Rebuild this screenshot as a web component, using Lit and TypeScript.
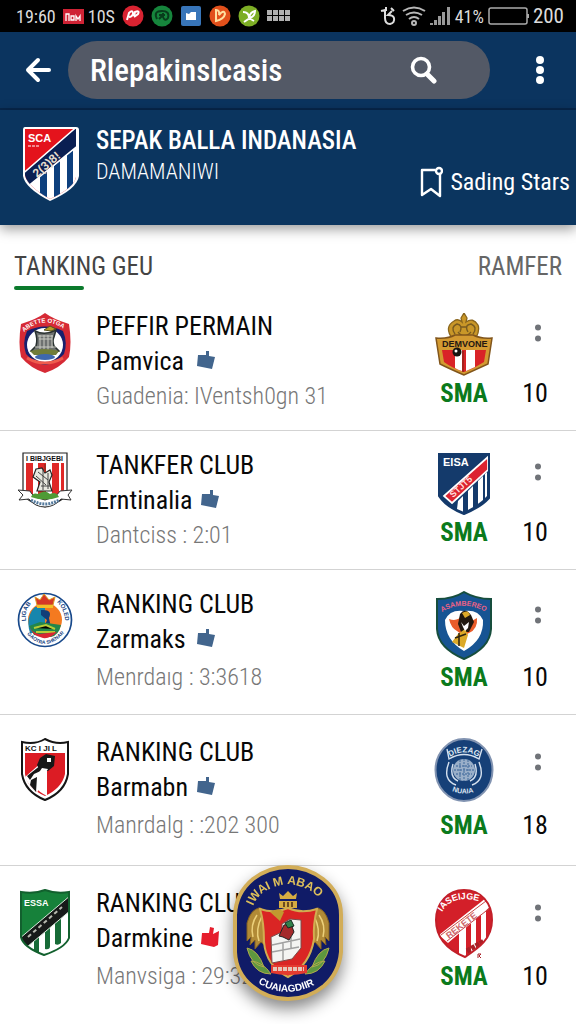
import { LitElement, html, svg, css, TemplateResult } from "lit";
import { customElement, property, state } from "lit/decorators.js";
import { classMap } from "lit/directives/class-map.js";

const crestStyles = css`
  :host { display: block; }
  svg { display: block; }
  text { font-family: "Liberation Sans", sans-serif; font-weight: 700; }
`;

const crests: Record<string, TemplateResult> = {
  sca: html`<svg width="58" height="76" viewBox="0 0 58 76" aria-hidden="true">
    <defs><clipPath id="c"><path d="M3 3H54V51Q52 62 28 73Q5 60 3 49Z"/></clipPath></defs>
    <path d="M3 1H54Q57 1 57 4V50Q55 63 28 75Q3 62 1 50V4Q1 1 3 1Z" fill="#fff"/>
    <g clip-path="url(#c)">
      <path d="M0 0H58V76H0Z" fill="#e4131c"/>
      <path d="M0 58L58 12V76H0Z" fill="#fff"/>
      <path d="M18 50L25 44V76H18ZM32 40L38 35V76H32ZM45 29L51 24V76H45Z" fill="#0d3f7d"/>
      <path d="M-2 50L58 -2V18L5 61Z" fill="#0a1f52" stroke="#fff" stroke-width="1.5"/>
      <path d="M6 60L28 75L4 70Z" fill="#0d3f7d"/>
    </g>
    <text x="6" y="16" font-size="11" fill="#fff">SCA</text>
    <path d="M6 20H18" stroke="#fff" stroke-width="1" stroke-dasharray="3 1"/>
    <text x="15" y="52" font-size="12" fill="#e8dfd0" transform="rotate(-41 15 52)">2(3)8!</text>
  </svg>`,
  round: html`<svg width="54" height="60" viewBox="0 0 54 60" aria-hidden="true">
    <defs><path id="a" d="M6 19Q27 0 50 19"/></defs>
    <path d="M27 0Q35 6 51 11Q54 30 51 44Q42 55 27 60Q12 55 3 44Q0 30 3 11Q19 6 27 0Z" fill="#d62a35"/>
    <path d="M9 18Q27 9 45 18Q50 30 46 41Q38 50 27 52Q16 50 8 41Q4 30 9 18Z" fill="#18206e"/>
    <ellipse cx="27" cy="32" rx="18" ry="17" fill="#fff"/>
    <path d="M17 18Q27 23 38 17L36 24Q34 28 36 33L41 38Q27 44 13 38L18 33Q20 26 17 18Z" fill="#6e7170" stroke="#28302f" stroke-width="1.5"/>
    <path d="M20 23H35M21 26H34M22 22V36M26 22V37M30 22V37M34 22V35M17 34H38" stroke="#c9cbc2" stroke-width="1"/>
    <path d="M26 17L32 13L38 16L33 18Z" fill="#b99c24" stroke="#57501e"/>
    <path d="M12 38Q27 34 41 38L38 42H16Z" fill="#707c39"/>
    <ellipse cx="27" cy="44" rx="10" ry="3" fill="#3e68ae"/>
    <path d="M9 45Q27 55 45 45" fill="none" stroke="#ef5b4d" stroke-width="3"/>
    <text font-size="6" fill="#fff"><textPath href="#a">ABETTE OTGA</textPath></text>
  </svg>`,
  banner: html`<svg width="56" height="58" viewBox="0 0 56 58" aria-hidden="true">
    <path d="M6 1H50V43Q44 50 28 55Q12 51 6 43Z" fill="#fff" stroke="#222" stroke-width="1.2"/>
    <path d="M9 11H47V42Q38 49 28 51Q16 49 9 42Z" fill="#df2827"/>
    <path d="M16 11H21V46H16ZM29 11H35V48H29ZM42 11H44V44H42Z" fill="#fff"/>
    <text x="9" y="9" font-size="7" fill="#111">I BIBJGEBI</text>
    <path d="M19 17L25 16L28 21L33 18L35 23L32 30L35 39H20L23 30L16 25Z" fill="#e7e7df" stroke="#222" stroke-width="1.2"/>
    <path d="M21 20L31 28M19 24L29 33M24 34H34M26 17V38M31 21V37" stroke="#444"/>
    <path d="M28 12V20" stroke="#a82a20" stroke-width="2"/>
    <path d="M1 38L13 39Q15 45 28 48Q40 45 43 39L55 38L51 43L54 48L44 47Q37 55 28 55Q18 55 12 47L2 48L6 43Z" fill="#fff" stroke="#333"/>
    <path d="M14 45Q16 40 21 42Q28 37 33 42Q39 39 42 45Q28 50 14 45Z" fill="#4e9b35"/>
    <path d="M14 48Q28 56 42 48" fill="none" stroke="#547a9d" stroke-width="3" stroke-dasharray="2 1"/>
  </svg>`,
  harbour: html`<svg width="56" height="58" viewBox="0 0 56 58" aria-hidden="true">
    <defs><path id="l" d="M9 30Q7 18 18 9"/><path id="r" d="M40 11Q48 19 48 31"/><path id="b" d="M10 43Q28 64 48 41"/></defs>
    <circle cx="28" cy="29" r="26.5" fill="#fff" stroke="#18498b" stroke-width="1.7"/>
    <circle cx="28" cy="29" r="17" fill="#f47a20"/>
    <path d="M18 16H28V42H13Q8 26 18 16Z" fill="#1686ad"/>
    <path d="M18 6L23 9L27 3L32 9L38 6L36 14H20Z" fill="#d63726" stroke="#d99b21"/>
    <path d="M20 14H36V17H20Z" fill="#f3bd27"/>
    <path d="M24 19Q36 18 32 27L34 37H27L30 29L24 24Z" fill="#123e78"/>
    <path d="M12 35L23 31L44 34Q42 44 34 46L17 44Z" fill="#23864b"/>
    <path d="M17 37L29 34L38 38M19 41H38" stroke="#b6cc37" stroke-width="2"/>
    <path d="M12 33Q13 41 22 43L40 41Q33 48 26 47Q14 45 12 33Z" fill="#d92632"/>
    <text font-size="6" fill="#16437f"><textPath href="#l">LIGAB</textPath></text>
    <text font-size="6" fill="#16437f"><textPath href="#r">KOLED</textPath></text>
    <text font-size="5" fill="#16437f"><textPath href="#b">GAOTRA SHENAR</textPath></text>
  </svg>`,
  knight: html`<svg width="50" height="64" viewBox="0 0 50 64" aria-hidden="true">
    <path d="M2 4Q15 7 25 1Q36 7 48 4V36Q45 54 25 62Q5 54 2 36Z" fill="#fff" stroke="#151515" stroke-width="2"/>
    <path d="M5 15H45V36Q42 50 25 58Q7 50 5 36Z" fill="#dc1c24"/>
    <path d="M19 29H27V58Q19 54 16 50Z" fill="#fff"/>
    <path d="M5 39L21 25L27 31L19 39L18 54Q8 48 5 39Z" fill="#fff"/>
    <path d="M20 20L26 16L35 18L34 28L28 33H20L17 27Z" fill="#171717"/>
    <path d="M7 38L21 27L25 31L14 36L10 42ZM11 42L17 39L16 54L10 47Z" fill="#171717"/>
    <path d="M27 20H31V24H27M22 30L28 31L25 36H18Z" fill="#fff"/>
    <text x="5" y="13" font-size="8" fill="#111">KC I JI L</text>
  </svg>`,
  essa: html`<svg width="52" height="68" viewBox="0 0 52 68" aria-hidden="true">
    <defs><clipPath id="c"><path d="M2 3Q16 5 26 1Q37 5 50 3V49Q46 59 25 66Q4 58 2 48Z"/></clipPath></defs>
    <g clip-path="url(#c)">
      <path d="M0 0H52V68H0Z" fill="#16813a"/>
      <path d="M2 57L52 19V68H2Z" fill="#fff"/>
      <path d="M15 47L20 43V68H15ZM26 39L31 35V57Q31 61 26 60ZM36 31L42 27V54Q39 57 36 55Z" fill="#176b37"/>
      <path d="M0 50L52 6V21L8 58Z" fill="#171a19" stroke="#d8eadb"/>
      <path d="M9 48L43 18" stroke="#b8bab0" stroke-width="2" stroke-dasharray="4 3"/>
    </g>
    <path d="M2 3Q16 5 26 1Q37 5 50 3V49Q46 59 25 66Q4 58 2 48Z" fill="none" stroke="#12602e" stroke-width="2"/>
    <text x="5" y="17" font-size="9" fill="#fff">ESSA</text>
  </svg>`,
  crown: html`<svg width="58" height="64" viewBox="0 0 58 64" aria-hidden="true">
    <path d="M17 25Q9 14 19 8Q23 5 27 9L26 5L29 0L32 5L31 9Q38 4 43 12Q45 17 41 25Z" fill="#c99728" stroke="#89651d" stroke-width="1.3"/>
    <path d="M20 21Q15 14 22 11Q28 12 25 19M38 21Q43 14 36 11Q29 12 33 19M23 19Q29 27 36 19M26 14H32" fill="none" stroke="#795b20" stroke-width="1.4"/>
    <path d="M1 25Q13 26 20 22H38Q46 26 57 25L53 51Q42 56 29 62Q15 56 5 51Z" fill="#d39a31" stroke="#81551b" stroke-width="1.5"/>
    <path d="M7 37H51L49 49Q40 55 29 59Q17 55 9 49Z" fill="#d92327"/>
    <path d="M20 37H27V58Q23 57 20 55ZM31 37H40V54L31 58Z" fill="#fff"/>
    <path d="M28 38V59" stroke="#92231d" stroke-width="1.5"/>
    <circle cx="22" cy="39" r="4.5" fill="#171411"/><circle cx="21" cy="38" r="1.5" fill="#fff"/>
    <text x="7" y="34" font-size="9" fill="#241711">DEMVONE</text>
  </svg>`,
  eisa: html`<svg width="52" height="64" viewBox="0 0 52 64" aria-hidden="true">
    <path d="M1 2H51V46Q43 55 26 62Q8 55 1 44Z" fill="#143a6b"/>
    <path d="M20 49L49 20V44Q42 52 26 60L19 57Z" fill="#fff"/>
    <path d="M25 43L30 38V60H25ZM35 33L40 28V56H35ZM45 23L47 21V51H45Z" fill="#143a6b"/>
    <path d="M6 44L50 5V18L14 51Z" fill="#dc2330" stroke="#fff" stroke-width="1.7"/>
    <path d="M1 2H51V46Q43 55 26 62Q8 55 1 44Z" fill="none" stroke="#143a6b" stroke-width="2"/>
    <text x="5" y="14" font-size="11" fill="#fff">EISA</text>
    <text x="15" y="46" font-size="9" fill="#ffdfdc" transform="rotate(-42 15 46)">STJT5</text>
  </svg>`,
  garuda: html`<svg width="58" height="70" viewBox="0 0 58 70" aria-hidden="true">
    <defs><path id="a" d="M7 21Q29 8 53 22"/></defs>
    <path d="M2 8Q18 8 29 1Q41 8 56 8V38Q55 57 29 68Q3 57 2 38Z" fill="#175493" stroke="#174e3d" stroke-width="2"/>
    <path d="M10 29Q15 18 29 20Q43 18 48 29Q49 49 29 60Q10 49 10 29Z" fill="#fff"/>
    <path d="M14 28Q23 31 27 24Q32 25 35 31L42 27Q43 38 34 42Q28 46 22 40Q16 37 14 28Z" fill="#e95c2a"/>
    <path d="M25 23Q30 16 36 24L39 31L34 41L26 41L23 33Z" fill="#21180f"/>
    <path d="M27 22Q33 18 35 24L30 27ZM23 43L30 38L33 44L29 57L17 51Z" fill="#dca928"/>
    <path d="M26 31L29 35L34 31L33 37L30 40L28 36Z" fill="#fff"/>
    <path d="M20 47L31 43M24 42V55" stroke="#2f2410" stroke-width="1.5"/>
    <text font-size="7" fill="#ef6285"><textPath href="#a">ASAMBEREO</textPath></text>
  </svg>`,
  seal: html`<svg width="60" height="64" viewBox="0 0 60 64" aria-hidden="true">
    <defs><path id="a" d="M16 19Q30 9 46 20"/><path id="b" d="M18 53Q30 58 44 53"/></defs>
    <ellipse cx="30" cy="32" rx="28.5" ry="31" fill="#164078" stroke="#8193b1" stroke-width="2"/>
    <path d="M13 11L15 21Q30 12 45 21L48 11M15 24Q8 42 22 47M45 24Q52 42 38 47M19 26Q15 39 24 43M41 26Q45 39 36 43" fill="none" stroke="#d6e1ef" stroke-width="1.4"/>
    <circle cx="30" cy="32" r="11" fill="#9aafc9"/>
    <path d="M22 28H38M20 32H40M22 36H38M26 22V42M30 21V43M34 22V42" stroke="#557aa6" stroke-width="1.3" stroke-dasharray="2 1"/>
    <text font-size="8" fill="#dce7f3"><textPath href="#a">DIEZAG</textPath></text>
    <text font-size="7" fill="#dce7f3"><textPath href="#b">NUAIA</textPath></text>
  </svg>`,
  stripes: html`<svg width="60" height="70" viewBox="0 0 60 70" aria-hidden="true">
    <defs>
      <clipPath id="c"><path d="M30 1C47 1 58 14 58 31C58 51 43 60 31 68C14 61 2 49 2 31C2 14 14 1 30 1Z"/></clipPath>
      <path id="a" d="M8 23Q20 3 50 14"/>
    </defs>
    <g clip-path="url(#c)">
      <path d="M0 0H60V70H0Z" fill="#d31f29"/>
      <path d="M25 42L32 37V70H25ZM37 33L42 29V70H37ZM47 25L52 21V70H47Z" fill="#fff"/>
      <path d="M5 46L52 9L57 17L14 54Z" fill="#fff"/>
      <path d="M7 46L52 12M13 52L56 19" stroke="#c74547" stroke-width="1"/>
      <path d="M33 62L50 52" stroke="#a81f26" stroke-width="5" stroke-dasharray="4 1"/>
    </g>
    <path d="M30 1C47 1 58 14 58 31C58 51 43 60 31 68C14 61 2 49 2 31C2 14 14 1 30 1Z" fill="none" stroke="#c21f29" stroke-width="2"/>
    <text font-size="9" fill="#fff"><textPath href="#a">IASEIJGE</textPath></text>
    <text x="15" y="50" font-size="9" fill="#ce686b" transform="rotate(-38 15 50)">REKETE</text>
    <path d="M44 69V65H47L45 67L47 69" fill="none" stroke="#a81f26"/>
  </svg>`,
  medallion: html`<svg width="110" height="136" viewBox="0 0 110 136" aria-hidden="true">
    <defs><path id="a" d="M20 41Q28 22 55 19Q83 22 94 44"/><path id="b" d="M25 118Q55 137 90 115"/></defs>
    <path d="M55 2Q74 2 90 14Q108 28 108 50V87Q106 108 91 121Q75 134 55 134Q34 134 19 121Q3 108 2 87V50Q3 28 20 14Q36 2 55 2Z" fill="#101b67" stroke="#d2ad58" stroke-width="4"/>
    <path d="M46 28L47 34H63L64 28L60 31L55 26L50 31ZM46 36H64V43H46Z" fill="#d6ac42"/>
    <path d="M51 37V42M55 37V42M59 37V42" stroke="#6b4b20" stroke-width="2"/>
    <path d="M28 43Q18 43 14 58V76L18 72L17 80L22 75L22 84L28 77L34 82L36 51ZM83 43Q92 43 96 58V76L92 72L93 80L88 75L88 84L82 77L76 82L74 51Z" fill="#b18a36" stroke="#826022"/>
    <path d="M24 50Q17 60 20 72M29 51Q22 65 26 76M86 50Q93 60 90 72M81 51Q88 65 84 76" fill="none" stroke="#ecd07a" stroke-width="1.5"/>
    <path d="M14 83Q25 85 31 102Q18 100 14 83ZM18 96Q30 97 38 109Q24 109 18 96ZM96 83Q85 85 79 102Q92 100 96 83ZM92 96Q80 97 72 109Q86 109 92 96Z" fill="#5e973f" stroke="#b0a94c"/>
    <path d="M27 44Q42 49 55 43Q68 49 84 44Q80 59 81 74Q77 100 55 112Q33 101 31 77Q31 57 27 44Z" fill="#da2524" stroke="#d1ad50" stroke-width="2"/>
    <path d="M38 72L49 67V59L57 54L68 55V83L59 94L39 98Z" fill="#f4f4f2" stroke="#7b4c4a"/>
    <path d="M39 80L67 74M39 87L66 82M50 78V95M58 72V84" stroke="#a1a1a1" stroke-width="1.5"/>
    <path d="M46 71L51 60L58 59L61 67L56 75L50 72Z" fill="#a4292a" stroke="#222"/>
    <path d="M52 58L58 55L61 61L55 63Z" fill="#31824a" stroke="#172b20"/>
    <path d="M37 47Q46 42 51 47L47 56Z" fill="#c19a2f"/>
    <path d="M38 100H74V108Q55 112 38 108Z" fill="#e43b30"/>
    <path d="M40 104H71" stroke="#e5c7b9" stroke-width="4" stroke-dasharray="4 1"/>
    <text font-size="12" fill="#dec05a"><textPath href="#a">IWAI M ABAO</textPath></text>
    <text font-size="10" fill="#fff"><textPath href="#b">CUAIAGDIIR</textPath></text>
  </svg>`,
};

@customElement("club-crest")
export class ClubCrest extends LitElement {
  static styles = crestStyles;
  @property() name = "";
  render() {
    return crests[this.name];
  }
}

interface Club {
  title: string;
  name: string;
  detail: string;
  crest: string;
  badge: string;
  points: string;
  spacing: "compact" | "regular" | "roomy";
  hot?: boolean;
}

const clubs: Club[] = [
  { title: "PEFFIR PERMAIN", name: "Pamvica", detail: "Guadenia: IVentsh0gn 31", crest: "round", badge: "crown", points: "10", spacing: "compact" },
  { title: "TANKFER CLUB", name: "Erntinalia", detail: "Dantciss : 2:01", crest: "banner", badge: "eisa", points: "10", spacing: "compact" },
  { title: "RANKING CLUB", name: "Zarmaks", detail: "Menrdaıg : 3:3618", crest: "harbour", badge: "garuda", points: "10", spacing: "regular" },
  { title: "RANKING CLUB", name: "Barmabn", detail: "Manrdalg : :202 300", crest: "knight", badge: "seal", points: "18", spacing: "roomy" },
  { title: "RANKING CLUB", name: "Darmkine", detail: "Manvsiga : 29:32", crest: "essa", badge: "stripes", points: "10", spacing: "roomy", hot: true },
];

@customElement("app-root")
export class AppRoot extends LitElement {
  static styles = css`
    :host {
      display: block;
      min-height: 100vh;
      background: #fff;
      color: #080808;
      font-family: "Roboto Condensed", "Liberation Sans Narrow", Roboto, sans-serif;
    }
    * { box-sizing: border-box; }
    svg { display: block; flex: none; }
    button { border: 0; padding: 0; background: none; font: inherit; color: inherit; cursor: pointer; }
    h1, h2, p, ul { margin: 0; padding: 0; font-weight: 400; }

    .status { display: flex; justify-content: space-between; align-items: center; height: 32px; padding: 0 12px 0 16px; background: #000; color: #dcdcdc; font-size: 18px; }
    .group { display: flex; align-items: center; gap: 7px; }
    .tight { gap: 4px; }
    .reading { font-size: 21px; }

    .toolbar { display: flex; align-items: center; height: 78px; padding: 0 16px; background: #0b345f; border-bottom: 2px solid #07264b; }
    .back { width: 52px; height: 48px; display: flex; align-items: center; padding-left: 8px; }
    .search { flex: 1; max-width: 422px; min-width: 0; display: flex; align-items: center; height: 58px; padding: 0 53px 0 22px; border-radius: 29px; background: #535966; }
    .search input { flex: 1; min-width: 0; border: 0; padding: 0; outline: 0; background: none; color: #fff; font: inherit; font-size: 31px; font-weight: 500; }
    .more { margin-left: auto; width: 40px; height: 48px; display: flex; align-items: center; justify-content: center; color: #fff; }

    .banner { display: flex; height: 115px; padding: 16px 6px 0 22px; gap: 16px; background: #0b355f; color: #fff; box-shadow: 0 4px 12px #0006; position: relative; }
    .heading { flex: 1; min-width: 0; white-space: nowrap; }
    .heading h1 { font-size: 25px; line-height: 30px; font-weight: 500; }
    .heading p { font-size: 22px; line-height: 32px; font-weight: 300; }
    .follow { align-self: flex-start; margin-top: 40px; display: flex; align-items: center; gap: 7px; font-size: 24px; line-height: 32px; white-space: nowrap; }

    .tabs { display: flex; justify-content: space-between; height: 67px; padding: 26px 14px 0; font-size: 25px; line-height: 32px; color: #666; }
    .tab { display: flex; flex-direction: column; align-items: flex-start; gap: 3px; height: 39px; }
    .tab.active { color: #444; }
    .tab.active::after { content: ""; width: 70px; height: 4px; border-radius: 2px; background: #0b7a2c; }

    .list { list-style: none; }
    .row { display: grid; grid-template-columns: 58px minmax(0, 1fr) 60px 44px; column-gap: 22px; padding: 17px 16px 16px 16px; border-bottom: 1px solid #d3d3d3; }
    .row:last-child { border-bottom: 0; }
    .regular { padding-bottom: 19px; }
    .roomy { padding-top: 19px; padding-bottom: 22px; }
    .crest { display: flex; justify-content: center; padding-top: 4px; }
    .text { white-space: nowrap; }
    .title, .name { font-size: 26px; line-height: 35px; }
    .roomy .title { line-height: 36px; }
    .name { display: flex; align-items: center; gap: 8px; }
    .name span { min-width: 93px; }
    .thumb { color: #42658d; margin-bottom: 4px; }
    .thumb.hot { color: #e61e2d; }
    .detail { font-size: 24px; line-height: 35px; color: #777; font-weight: 300; }
    .regular .detail, .roomy .detail { margin-top: 3px; }
    .side { display: flex; flex-direction: column; align-items: center; justify-content: space-between; }
    .compact .side { padding-bottom: 3px; }
    .badge { display: flex; align-items: flex-start; padding-top: 4px; height: 67px; }
    .abbr { font-size: 25px; line-height: 35px; font-weight: 700; color: #0b7a1c; }
    .points { font-size: 26px; line-height: 35px; padding-right: 6px; }
    .options { width: 40px; height: 48px; display: flex; align-items: center; justify-content: center; color: #707378; }
    .regular .options, .roomy .options { margin-top: 4px; }

    .floating { position: fixed; left: 0; right: 0; bottom: 23px; width: 110px; margin: 0 auto; filter: drop-shadow(0 8px 8px #0007); }
  `;

  @state() private query = "Rlepakinslcasis";
  @state() private tab = 0;

  private dots(count: number) {
    const step = count === 3 ? 10 : 11;
    const r = count === 3 ? 4 : 3;
    return html`<svg width="10" height=${count * step} viewBox="0 0 10 ${count * step}" fill="currentColor" aria-hidden="true">
      ${Array.from({ length: count }, (_, i) => svg`<circle cx="5" cy=${step / 2 + i * step} r=${r} />`)}
    </svg>`;
  }

  private row(c: Club) {
    return html`<li class="row ${c.spacing}">
      <div class="crest"><club-crest name=${c.crest}></club-crest></div>
      <div class="text">
        <h2 class="title">${c.title}</h2>
        <p class="name"><span>${c.name}</span>
          <svg class=${classMap({ thumb: true, hot: !!c.hot })} width="18" height="20" viewBox="0 0 18 20" fill="currentColor" aria-hidden="true">
            <path d=${c.hot ? "M1 6L8 6L9 0L13 1L12 7L18 4L17 18L13 20L0 17Z" : "M1 5L9 5L9 1L12 1L12 6L18 7L15 19L0 16Z"}/>
          </svg>
        </p>
        <p class="detail">${c.detail}</p>
      </div>
      <div class="side">
        <div class="badge"><club-crest name=${c.badge}></club-crest></div>
        <span class="abbr">SMA</span>
      </div>
      <div class="side">
        <button class="options" aria-label="Options">${this.dots(2)}</button>
        <span class="points">${c.points}</span>
      </div>
    </li>`;
  }

  render() {
    return html`
      <div class="status">
        <div class="group">
          <span>19:60</span>
          <div class="group tight">
            <svg width="21" height="16" viewBox="0 0 21 16"><path d="M0 1H21V16H0Z" fill="#cf2335"/><path d="M3 13V6H6V13M8 12V8H11V12ZM13 13V8L15 11L17 8V13" fill="none" stroke="#fff" stroke-width="1.3"/></svg>
            <span>10S</span>
          </div>
          <svg width="22" height="22" viewBox="0 0 22 22"><circle cx="11" cy="11" r="10.5" fill="#d92331"/><path d="M5 15L7 8Q11 4 11 9Q10 12 7 12M12 11L13 7Q18 5 16 9L12 12" fill="none" stroke="#fff" stroke-width="2"/></svg>
          <svg width="22" height="22" viewBox="0 0 22 22"><circle cx="11" cy="11" r="10.5" fill="#16853c"/><path d="M6 14Q2 6 11 6Q19 6 17 13Q14 17 12 12V8M8 10H14M8 14L11 11" fill="none" stroke="#083c1c" stroke-width="2"/></svg>
          <svg width="22" height="22" viewBox="0 0 22 22"><rect x="1" y="1" width="20" height="20" rx="2" fill="#3875b9"/><path d="M6 8L9 9L11 7H16V15H6Z" fill="#fff"/></svg>
          <svg width="22" height="22" viewBox="0 0 22 22"><circle cx="11" cy="11" r="10.5" fill="#e2501b"/><path d="M7 16V5Q11 5 10 10Q15 4 16 9Q15 14 7 16Z" fill="none" stroke="#ffe0a0" stroke-width="2"/></svg>
          <svg width="22" height="22" viewBox="0 0 22 22"><circle cx="11" cy="11" r="10.5" fill="#7dae25"/><path d="M5 7Q11 7 11 13Q12 7 17 6Q17 11 12 13L6 17M11 13L16 16" fill="none" stroke="#fff" stroke-width="2"/></svg>
          <svg width="24" height="12" viewBox="0 0 24 12" fill="#b0b0b0"><path d="M0 0H5V5H0ZM6 0H11V5H6ZM12 0H17V5H12ZM18 0H23V5H18ZM0 6H5V11H0ZM6 6H11V11H6ZM12 6H17V11H12ZM18 6H23V11H18Z"/></svg>
        </div>
        <div class="group tight">
          <svg width="18" height="20" viewBox="0 0 18 20" fill="none" stroke="#ddd" stroke-width="2"><path d="M1 5L5 4V12Q5 18 10 18Q15 17 14 12Q13 9 8 9L12 5M6 1V5M11 2L14 5"/></svg>
          <svg width="24" height="20" viewBox="0 0 24 20" fill="none" stroke="#b8b8b8" stroke-width="2"><path d="M1 5Q12 -2 23 5M4 9Q12 4 20 9M7 13Q12 9 17 13"/><circle cx="12" cy="17" r="2"/></svg>
          <svg width="21" height="20" viewBox="0 0 21 20" fill="#999"><path d="M0 17H3V19H0ZM4 14H7V19H4ZM8 10H11V19H8ZM12 6H15V19H12ZM17 1H20V19H17Z"/></svg>
          <span>41%</span>
          <svg width="41" height="18" viewBox="0 0 41 18"><rect x="1" y="1" width="38" height="16" rx="2" fill="none" stroke="#aaa" stroke-width="1.5"/><path d="M40 7V11" stroke="#aaa" stroke-width="2"/></svg>
          <span class="reading">200</span>
        </div>
      </div>

      <header class="toolbar">
        <button class="back" aria-label="Back">
          <svg width="30" height="28" viewBox="0 0 30 28" fill="none" stroke="#fff" stroke-width="4" stroke-linecap="round" stroke-linejoin="round"><path d="M14 4L4 14L14 24M4 14H25"/></svg>
        </button>
        <form class="search" role="search" @submit=${(e: Event) => e.preventDefault()}>
          <input type="text" aria-label="Search" .value=${this.query} @input=${(e: Event) => (this.query = (e.target as HTMLInputElement).value)} />
          <button aria-label="Submit search">
            <svg width="28" height="28" viewBox="0 0 28 28" fill="none" stroke="#fff" stroke-linecap="round"><circle cx="12" cy="11" r="8.5" stroke-width="3.6"/><path d="M18 18L25 25" stroke-width="5"/></svg>
          </button>
        </form>
        <button class="more" aria-label="More">${this.dots(3)}</button>
      </header>

      <section class="banner">
        <club-crest name="sca"></club-crest>
        <div class="heading">
          <h1>SEPAK BALLA INDANASIA</h1>
          <p>DAMAMANIWI</p>
        </div>
        <button class="follow">
          <svg width="23" height="32" viewBox="0 0 23 32" fill="none" stroke="#fff" stroke-width="2.4" stroke-linejoin="round"><path d="M15 4H2V29L11 23L20 30V8"/><circle cx="19" cy="5" r="3"/></svg>
          Sading Stars
        </button>
      </section>

      <nav class="tabs">
        ${["TANKING GEU", "RAMFER"].map((t, i) => html`<button class=${classMap({ tab: true, active: this.tab === i })} @click=${() => (this.tab = i)}>${t}</button>`)}
      </nav>

      <ul class="list">${clubs.map((c) => this.row(c))}</ul>

      <button class="floating" aria-label="Club medallion"><club-crest name="medallion"></club-crest></button>
    `;
  }
}
